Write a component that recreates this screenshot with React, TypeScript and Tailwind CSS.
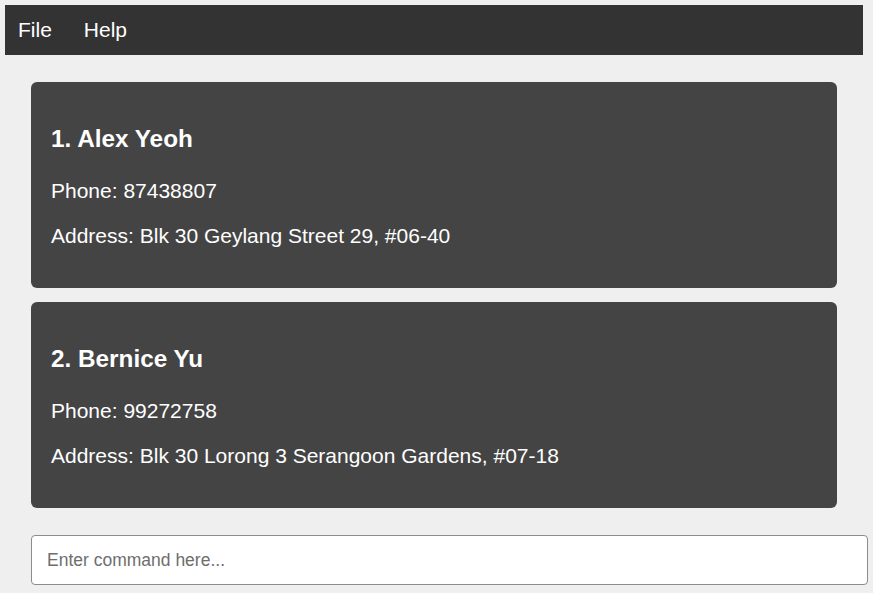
import React, { useState } from "react";

type Person = {
  name: string;
  phone: string;
  address: string;
};

const people: Person[] = [
  { name: "Alex Yeoh", phone: "87438807", address: "Blk 30 Geylang Street 29, #06-40" },
  { name: "Bernice Yu", phone: "99272758", address: "Blk 30 Lorong 3 Serangoon Gardens, #07-18" },
];

function PersonCard({ index, person }: { index: number; person: Person }) {
  return (
    <div className="mr-[31px] rounded-[6px] bg-[#444444] px-[20px] pt-[43px] pb-[40px] text-white">
      <h3 className="text-[24.3px] font-bold leading-[28px]">
        {index}. {person.name}
      </h3>
      <p className="mt-[26px] text-[21px] leading-[24px]">Phone: {person.phone}</p>
      <p className="mt-[21px] text-[21px] leading-[24px]">Address: {person.address}</p>
    </div>
  );
}

function App() {
  const [command, setCommand] = useState<string>("");

  return (
    <div className="min-h-screen bg-[#efefef] pt-[5px] font-['Liberation_Sans',Arial,sans-serif]">
      {/* Menu Bar */}
      <div className="ml-[5px] mr-[10px] flex h-[50px] gap-[32px] bg-[#333333] pt-[13px] pl-[13px] text-[21px] leading-[24px] text-white">
        <span>File</span>
        <span>Help</span>
      </div>

      <div className="pt-[27px] pl-[31px] pr-[5px]">
        {/* Person List */}
        <div className="flex flex-col gap-[14px]">
          {people.map((p, i) => (
            <PersonCard key={p.name} index={i + 1} person={p} />
          ))}
        </div>

        {/* Command Box */}
        <input
          type="text"
          value={command}
          onChange={(e) => setCommand(e.target.value)}
          placeholder="Enter command here..."
          className="mt-[27px] block h-[50px] w-full rounded-[4px] border border-[#8c8c8c] bg-white px-[15px] text-[17.5px] text-[#333333] placeholder:text-[#6e6e6e] focus:outline-none"
        />
      </div>
    </div>
  );
}

export default App;
